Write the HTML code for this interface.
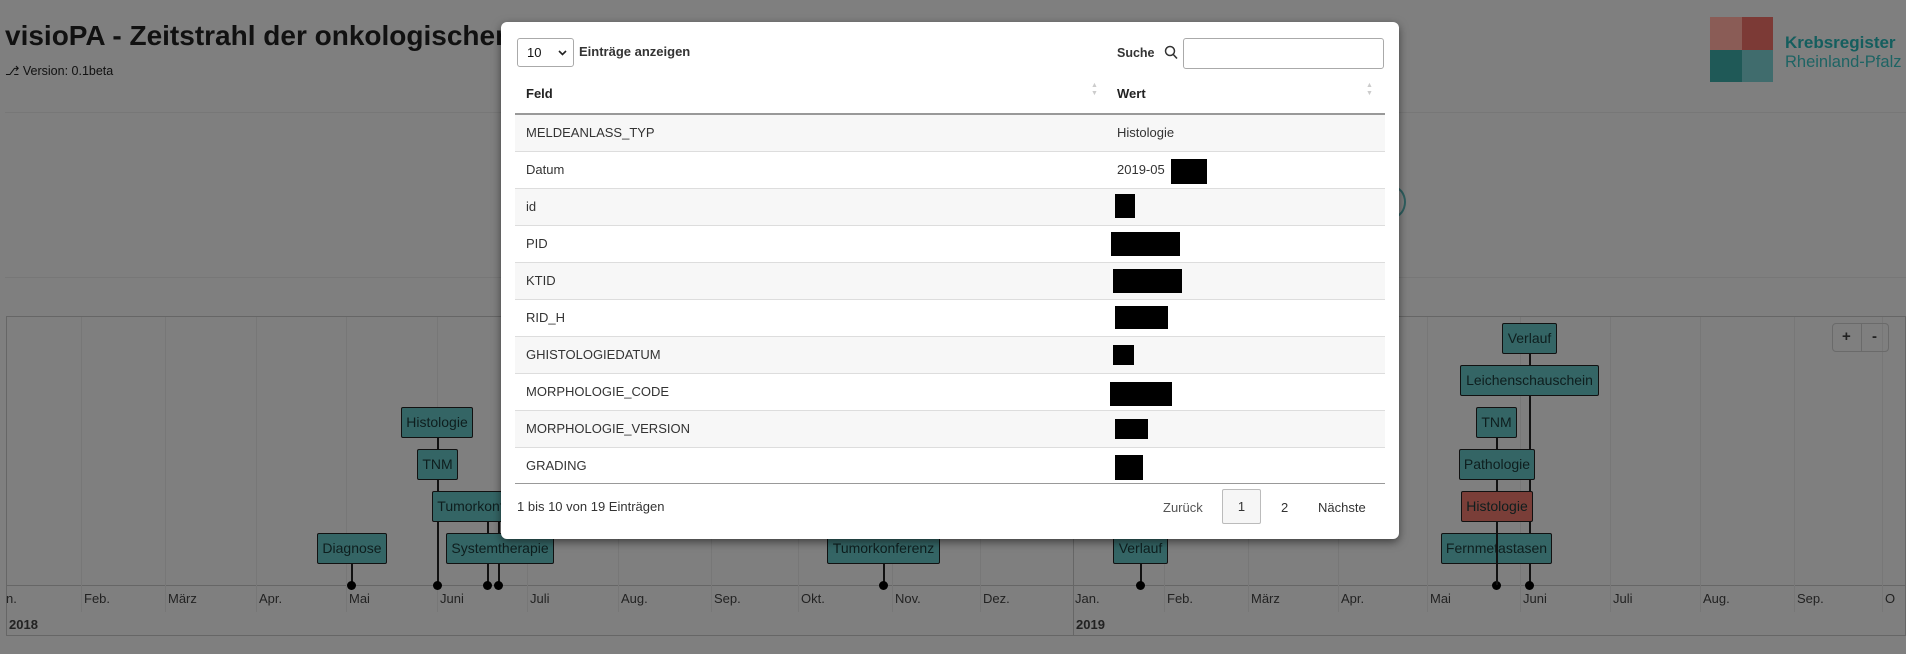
<!DOCTYPE html>
<html><head><meta charset="utf-8"><style>
*{box-sizing:border-box;margin:0;padding:0}
html,body{background:#7f7f7f}
body{width:1906px;height:654px;font-family:"Liberation Sans",sans-serif;position:relative;overflow:hidden;color:#111}
.a{position:absolute}
.grid{position:absolute;top:317px;height:295px;width:1px;background:#777}
.mon{position:absolute;top:591px;font-size:13px;color:#222}
.box{position:absolute;height:31px;background:#346565;border:1px solid #111;border-radius:2px;font-size:14px;line-height:29px;text-align:center;color:#0e1e1e;white-space:nowrap;overflow:hidden}
.vl{position:absolute;width:1.5px;background:#111}
.dot{position:absolute;width:9px;height:9px;border-radius:50%;background:#000;top:581px}
.modal{position:absolute;left:501px;top:22px;width:898px;height:517px;background:#fff;border-radius:6px;box-shadow:0 3px 9px rgba(0,0,0,.5);overflow:hidden}
.row{position:absolute;left:14px;width:870px;height:37px;border-top:1px solid #ddd;font-size:13px;color:#333;line-height:36px}
.row span{position:absolute;left:11px}
.row b{position:absolute;left:602px;font-weight:normal}
.red{position:absolute;background:#000}
</style></head><body>
<div class="a" style="left:5px;top:20px;font-size:28px;font-weight:bold;color:#111">visioPA - Zeitstrahl der onkologischen</div>
<div class="a" style="left:5px;top:63px;font-size:12.5px;color:#111">&#x2387; Version: 0.1beta</div>
<div class="a" style="left:1710px;top:17px;width:32px;height:33px;background:#8a5c56"></div>
<div class="a" style="left:1742px;top:17px;width:31px;height:33px;background:#7c3a36"></div>
<div class="a" style="left:1710px;top:50px;width:32px;height:32px;background:#1f5957"></div>
<div class="a" style="left:1742px;top:50px;width:31px;height:32px;background:#406c6d"></div>
<div class="a" style="left:1785px;top:33px;font-size:17px;font-weight:bold;color:#145e5e">Krebsregister</div>
<div class="a" style="left:1785px;top:53px;font-size:16.5px;color:#1e6464">Rheinland-Pfalz</div>
<div class="a" style="left:5px;top:112px;width:1901px;height:1px;background:#777"></div>
<div class="a" style="left:5px;top:277px;width:1901px;height:1px;background:#777"></div>
<div class="a" style="left:1380px;top:186px;width:26px;height:32px;border:2px solid #2e5f60;border-radius:50%"></div>
<div class="a" style="left:6px;top:316px;width:1900px;height:320px;border:1px solid #666"></div>
<div class="a" style="left:6px;top:585px;width:1900px;height:1px;background:#666"></div>
<div class="grid" style="left:81px"></div><div class="grid" style="left:165px"></div><div class="grid" style="left:256px"></div><div class="grid" style="left:346px"></div><div class="grid" style="left:437px"></div><div class="grid" style="left:527px"></div><div class="grid" style="left:618px"></div><div class="grid" style="left:711px"></div><div class="grid" style="left:798px"></div><div class="grid" style="left:892px"></div><div class="grid" style="left:980px"></div><div class="grid" style="left:1073px;height:319px;background:#666"></div><div class="grid" style="left:1164px"></div><div class="grid" style="left:1248px"></div><div class="grid" style="left:1338px"></div><div class="grid" style="left:1427px"></div><div class="grid" style="left:1520px"></div><div class="grid" style="left:1610px"></div><div class="grid" style="left:1700px"></div><div class="grid" style="left:1794px"></div><div class="grid" style="left:1882px"></div>
<div class="mon" style="left:6px">n.</div><div class="mon" style="left:84px">Feb.</div><div class="mon" style="left:168px">März</div><div class="mon" style="left:259px">Apr.</div><div class="mon" style="left:349px">Mai</div><div class="mon" style="left:440px">Juni</div><div class="mon" style="left:530px">Juli</div><div class="mon" style="left:621px">Aug.</div><div class="mon" style="left:714px">Sep.</div><div class="mon" style="left:801px">Okt.</div><div class="mon" style="left:895px">Nov.</div><div class="mon" style="left:983px">Dez.</div><div class="mon" style="left:1075px">Jan.</div><div class="mon" style="left:1167px">Feb.</div><div class="mon" style="left:1251px">März</div><div class="mon" style="left:1341px">Apr.</div><div class="mon" style="left:1430px">Mai</div><div class="mon" style="left:1523px">Juni</div><div class="mon" style="left:1613px">Juli</div><div class="mon" style="left:1703px">Aug.</div><div class="mon" style="left:1797px">Sep.</div><div class="mon" style="left:1885px">O</div>
<div class="a" style="left:9px;top:617px;font-size:13px;font-weight:bold;color:#222">2018</div>
<div class="a" style="left:1076px;top:617px;font-size:13px;font-weight:bold;color:#222">2019</div>
<div class="vl" style="left:351px;top:564px;height:21px"></div>
<div class="vl" style="left:437px;top:438px;height:147px"></div>
<div class="vl" style="left:487px;top:522px;height:63px"></div>
<div class="vl" style="left:498px;top:522px;height:63px"></div>
<div class="vl" style="left:883px;top:564px;height:21px"></div>
<div class="vl" style="left:1140px;top:564px;height:21px"></div>
<div class="vl" style="left:1496px;top:438px;height:147px"></div>
<div class="vl" style="left:1529px;top:354px;height:231px"></div>
<div class="dot" style="left:347px"></div><div class="dot" style="left:433px"></div><div class="dot" style="left:483px"></div><div class="dot" style="left:494px"></div><div class="dot" style="left:879px"></div><div class="dot" style="left:1136px"></div><div class="dot" style="left:1492px"></div><div class="dot" style="left:1525px"></div>
<div class="box" style="left:317px;top:533px;width:70px">Diagnose</div>
<div class="box" style="left:401px;top:407px;width:72px">Histologie</div>
<div class="box" style="left:417px;top:449px;width:41px">TNM</div>
<div class="box" style="left:432px;top:491px;width:112px">Tumorkonferenz</div>
<div class="box" style="left:446px;top:533px;width:108px">Systemtherapie</div>
<div class="box" style="left:827px;top:533px;width:113px">Tumorkonferenz</div>
<div class="box" style="left:1113px;top:533px;width:55px">Verlauf</div>
<div class="box" style="left:1502px;top:323px;width:55px">Verlauf</div>
<div class="box" style="left:1460px;top:365px;width:139px">Leichenschauschein</div>
<div class="box" style="left:1476px;top:407px;width:41px">TNM</div>
<div class="box" style="left:1459px;top:449px;width:76px">Pathologie</div>
<div class="box" style="left:1461px;top:491px;width:72px;background:#7a3e38">Histologie</div>
<div class="box" style="left:1441px;top:533px;width:111px">Fernmetastasen</div>
<div class="vl" style="left:1496px;top:533px;height:52px"></div>
<div class="a" style="left:1832px;top:323px;width:57px;height:29px;border:1px solid #6a6a6a;border-radius:4px;font-size:15px;font-weight:bold;color:#222"><span class="a" style="left:9px;top:4px">+</span><span class="a" style="left:28px;top:0;width:1px;height:27px;background:#6a6a6a"></span><span class="a" style="left:39px;top:4px">-</span></div>
<div class="modal">
 <div class="a" style="left:16px;top:16px;width:57px;height:29px;border:1px solid #aaa;border-radius:3px;font-size:13px;color:#111;line-height:27px;padding-left:9px">10<svg class="a" style="left:40px;top:11px" width="9" height="6" viewBox="0 0 9 6"><path d="M1 1l3.5 3.5L8 1" fill="none" stroke="#222" stroke-width="1.6"/></svg></div>
 <div class="a" style="left:78px;top:22px;font-size:13px;font-weight:bold;color:#333">Einträge anzeigen</div>
 <div class="a" style="left:616px;top:24px;font-size:12.5px;font-weight:bold;color:#333">Suche</div>
 <svg class="a" style="left:663px;top:23px" width="15" height="16" viewBox="0 0 15 16"><circle cx="6" cy="6" r="4.5" fill="none" stroke="#333" stroke-width="1.5"/><path d="M9.3 9.5L13 13.5" stroke="#333" stroke-width="1.6"/></svg>
 <div class="a" style="left:682px;top:16px;width:201px;height:31px;border:1px solid #aaa;border-radius:3px"></div>
 <div class="a" style="left:25px;top:64px;font-size:13px;font-weight:bold;color:#222">Feld</div>
 <div class="a" style="left:616px;top:64px;font-size:13px;font-weight:bold;color:#222">Wert</div>
 <div class="a" style="left:590px;top:60px;font-size:7px;color:#ccc;line-height:8px">▲<br>▼</div>
 <div class="a" style="left:865px;top:60px;font-size:7px;color:#ccc;line-height:8px">▲<br>▼</div>
 <div class="a" style="left:14px;top:91px;width:870px;height:2px;background:#999"></div>
 <div class="row" style="top:93px;background:#f7f7f7;border-top:none"><span>MELDEANLASS_TYP</span><b>Histologie</b></div>
 <div class="row" style="top:129px"><span>Datum</span><b>2019-05</b></div>
 <div class="row" style="top:166px;background:#f7f7f7"><span>id</span></div>
 <div class="row" style="top:203px"><span>PID</span></div>
 <div class="row" style="top:240px;background:#f7f7f7"><span>KTID</span></div>
 <div class="row" style="top:277px"><span>RID_H</span></div>
 <div class="row" style="top:314px;background:#f7f7f7"><span>GHISTOLOGIEDATUM</span></div>
 <div class="row" style="top:351px"><span>MORPHOLOGIE_CODE</span></div>
 <div class="row" style="top:388px;background:#f7f7f7"><span>MORPHOLOGIE_VERSION</span></div>
 <div class="row" style="top:425px"><span>GRADING</span></div>
 <div class="a" style="left:14px;top:461px;width:870px;height:1px;background:#999"></div>
 <div class="red" style="left:670px;top:137px;width:36px;height:25px"></div>
 <div class="red" style="left:614px;top:172px;width:20px;height:24px"></div>
 <div class="red" style="left:610px;top:210px;width:69px;height:24px"></div>
 <div class="red" style="left:612px;top:247px;width:69px;height:24px"></div>
 <div class="red" style="left:614px;top:284px;width:53px;height:23px"></div>
 <div class="red" style="left:612px;top:323px;width:21px;height:20px"></div>
 <div class="red" style="left:609px;top:360px;width:62px;height:24px"></div>
 <div class="red" style="left:614px;top:397px;width:33px;height:20px"></div>
 <div class="red" style="left:614px;top:433px;width:28px;height:25px"></div>
 <div class="a" style="left:16px;top:477px;font-size:13px;color:#333">1 bis 10 von 19 Einträgen</div>
 <div class="a" style="left:662px;top:478px;font-size:13px;color:#555">Zurück</div>
 <div class="a" style="left:721px;top:467px;width:39px;height:35px;border:1px solid #bbb;border-radius:2px;background:#f6f6f6;font-size:13px;color:#333;text-align:center;line-height:33px">1</div>
 <div class="a" style="left:780px;top:478px;font-size:13px;color:#333">2</div>
 <div class="a" style="left:817px;top:478px;font-size:13px;color:#333">Nächste</div>
</div>
</body></html>
